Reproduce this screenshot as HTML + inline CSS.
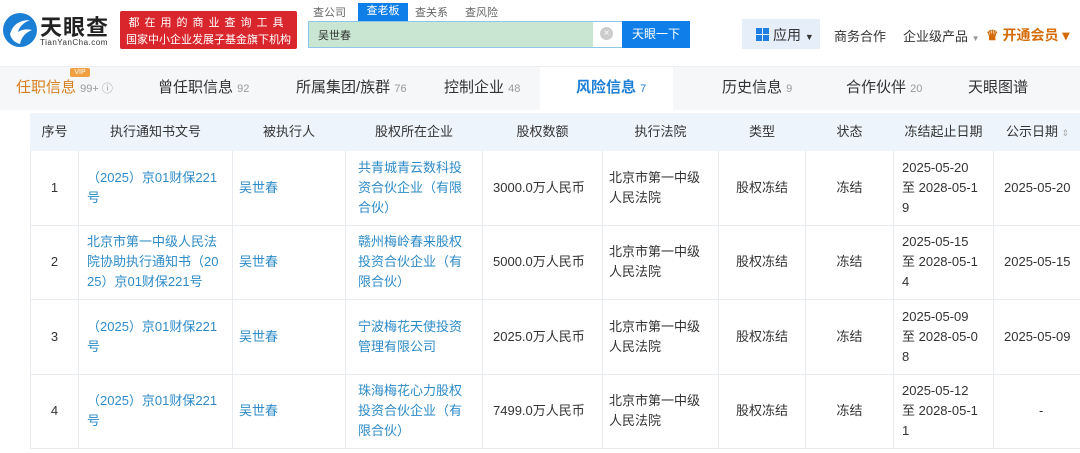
<!DOCTYPE html>
<html><head><meta charset="utf-8"><style>
*{margin:0;padding:0;box-sizing:border-box}
body{width:1080px;height:453px;overflow:hidden;background:#fff;font-family:"Liberation Sans","Noto Sans CJK SC",sans-serif;color:#333;position:relative}
.a{position:absolute}
.tabs{left:0;top:66px;width:1080px;height:44px;background:#f6f7f9;border-top:1px solid #eee}
.tab{position:absolute;top:0;height:44px;line-height:42px;font-size:15px;color:#333;white-space:nowrap}
.tab small{font-size:11px;color:#999}
table{position:absolute;left:30px;top:113px;width:1070px;border-collapse:collapse;table-layout:fixed;font-size:13px}
td,th{border:1px solid #e8ecf0;text-align:center;line-height:20px;padding:0 6px;vertical-align:middle;word-break:break-all}
th{background:#eef4fb;font-weight:normal;color:#333;height:37px;border-color:#eef4fb;white-space:nowrap}
td{height:74.5px}
.l{text-align:left;color:#2e8bc8}
.t{text-align:left}
.d{text-align:left;padding:0 10px 0 8px}
.c{padding:0 20px 0 12px}
</style></head><body>
<svg class="a" style="left:2px;top:12px" width="36" height="36" viewBox="0 0 36 36"><circle cx="18" cy="18" r="17" fill="#1b7fd6"/><path d="M8 22 Q12 8 28 8 Q18 12 16 20 Q22 16 30 18 Q20 22 18 32 Q10 30 8 22Z" fill="#fff"/></svg>
<div class="a" style="left:40px;top:10px;font-size:22px;font-weight:bold;color:#222;letter-spacing:1px">天眼查</div>
<div class="a" style="left:40px;top:38px;font-size:8px;color:#333;letter-spacing:0.5px">TianYanCha.com</div>
<div class="a" style="left:120px;top:11px;width:177px;height:38px;background:#d9262c;border-radius:2px;color:#fff;text-align:center">
<div style="font-size:11px;letter-spacing:5px;margin-top:3px">都在用的商业查询工具</div>
<div style="font-size:11px;margin-top:1px">国家中小企业发展子基金旗下机构</div></div>
<div class="a" style="left:313px;top:4px;font-size:11px;color:#666">查公司</div>
<div class="a" style="left:358px;top:3px;width:50px;height:18px;background:#0f7ee8;color:#fff;font-size:11px;text-align:center;line-height:17px">查老板</div>
<div class="a" style="left:415px;top:4px;font-size:11px;color:#666">查关系</div>
<div class="a" style="left:465px;top:4px;font-size:11px;color:#666">查风险</div>
<div class="a" style="left:308px;top:21px;width:320px;height:27px;border:1px solid #8ec7e8;background:#c8e6d2"></div>
<div class="a" style="left:593px;top:22px;width:32px;height:25px;background:#fff"></div>
<div class="a" style="left:600px;top:27px;width:13px;height:13px;border-radius:50%;background:#ccc;color:#fff;font-size:10px;line-height:13px;text-align:center">×</div>
<div class="a" style="left:318px;top:27px;font-size:11px;color:#333">吴世春</div>
<div class="a" style="left:622px;top:21px;width:68px;height:27px;background:#0f7ee8;color:#fff;font-size:12px;line-height:27px;text-align:center">天眼一下</div>
<div class="a" style="left:742px;top:19px;width:78px;height:30px;background:#e5eef9"></div>
<div class="a" style="left:756px;top:28px;width:13px;height:13px;background:linear-gradient(#1e7fe0,#1e7fe0) 0 0/6px 6px no-repeat,linear-gradient(#1e7fe0,#1e7fe0) 7px 0/6px 6px no-repeat,linear-gradient(#1e7fe0,#1e7fe0) 0 7px/6px 6px no-repeat,linear-gradient(#1e7fe0,#1e7fe0) 7px 7px/6px 6px no-repeat"></div>
<div class="a" style="left:773px;top:25px;font-size:14px;color:#333">应用 <span style="font-size:9px">▼</span></div>
<div class="a" style="left:834px;top:26px;font-size:13px;color:#333">商务合作</div>
<div class="a" style="left:903px;top:26px;font-size:13px;color:#333">企业级产品 <span style="font-size:8px;color:#999">▼</span></div>
<div class="a" style="left:986px;top:25px;font-size:14px;color:#d46b08;font-weight:bold">♛ 开通会员 ▾</div>
<div class="a tabs">
<div class="a" style="left:540px;top:0;width:133px;height:44px;background:#fff"></div>
<div class="tab" style="left:16px;color:#d6801f">任职信息 <small>99+ ⓘ</small></div>
<div class="a" style="left:70px;top:1px;width:20px;height:9px;background:#f0a040;color:#fff;font-size:7px;line-height:9px;text-align:center;border-radius:2px">VIP</div>
<div class="tab" style="left:158px">曾任职信息 <small>92</small></div>
<div class="tab" style="left:296px">所属集团/族群 <small>76</small></div>
<div class="tab" style="left:444px">控制企业 <small>48</small></div>
<div class="tab" style="left:576px;color:#1e7fd6;font-weight:bold">风险信息 <small style="color:#1e7fd6;font-weight:normal">7</small></div>
<div class="tab" style="left:722px">历史信息 <small>9</small></div>
<div class="tab" style="left:846px">合作伙伴 <small>20</small></div>
<div class="tab" style="left:968px">天眼图谱</div>
</div>
<table>
<colgroup><col style="width:48px"><col style="width:154px"><col style="width:113px"><col style="width:137px"><col style="width:120px"><col style="width:116px"><col style="width:87px"><col style="width:88px"><col style="width:100px"><col style="width:107px"></colgroup>
<tr><th>序号</th><th>执行通知书文号</th><th>被执行人</th><th>股权所在企业</th><th>股权数额</th><th>执行法院</th><th>类型</th><th>状态</th><th>冻结起止日期</th><th style="text-align:left;padding-left:12px">公示日期 <span style="color:#aaa;font-size:9px">⇕</span></th></tr>
<tr><td>1</td><td class="l" style="padding:0 12px 0 8px">（2025）京01财保221号</td><td class="l">吴世春</td><td class="l c">共青城青云数科投资合伙企业（有限合伙）</td><td class="t" style="padding-left:10px">3000.0万人民币</td><td class="t">北京市第一中级人民法院</td><td>股权冻结</td><td>冻结</td><td class="d">2025-05-20 至 2028-05-19</td><td class="t" style="padding-left:10px">2025-05-20</td></tr>
<tr><td>2</td><td class="l" style="padding:0 12px 0 8px">北京市第一中级人民法院协助执行通知书（2025）京01财保221号</td><td class="l">吴世春</td><td class="l c">赣州梅岭春来股权投资合伙企业（有限合伙）</td><td class="t" style="padding-left:10px">5000.0万人民币</td><td class="t">北京市第一中级人民法院</td><td>股权冻结</td><td>冻结</td><td class="d">2025-05-15 至 2028-05-14</td><td class="t" style="padding-left:10px">2025-05-15</td></tr>
<tr><td>3</td><td class="l" style="padding:0 12px 0 8px">（2025）京01财保221号</td><td class="l">吴世春</td><td class="l c">宁波梅花天使投资管理有限公司</td><td class="t" style="padding-left:10px">2025.0万人民币</td><td class="t">北京市第一中级人民法院</td><td>股权冻结</td><td>冻结</td><td class="d">2025-05-09 至 2028-05-08</td><td class="t" style="padding-left:10px">2025-05-09</td></tr>
<tr><td>4</td><td class="l" style="padding:0 12px 0 8px">（2025）京01财保221号</td><td class="l">吴世春</td><td class="l c">珠海梅花心力股权投资合伙企业（有限合伙）</td><td class="t" style="padding-left:10px">7499.0万人民币</td><td class="t">北京市第一中级人民法院</td><td>股权冻结</td><td>冻结</td><td class="d">2025-05-12 至 2028-05-11</td><td class="t" style="padding-left:45px">-</td></tr>
</table>
</body></html>
